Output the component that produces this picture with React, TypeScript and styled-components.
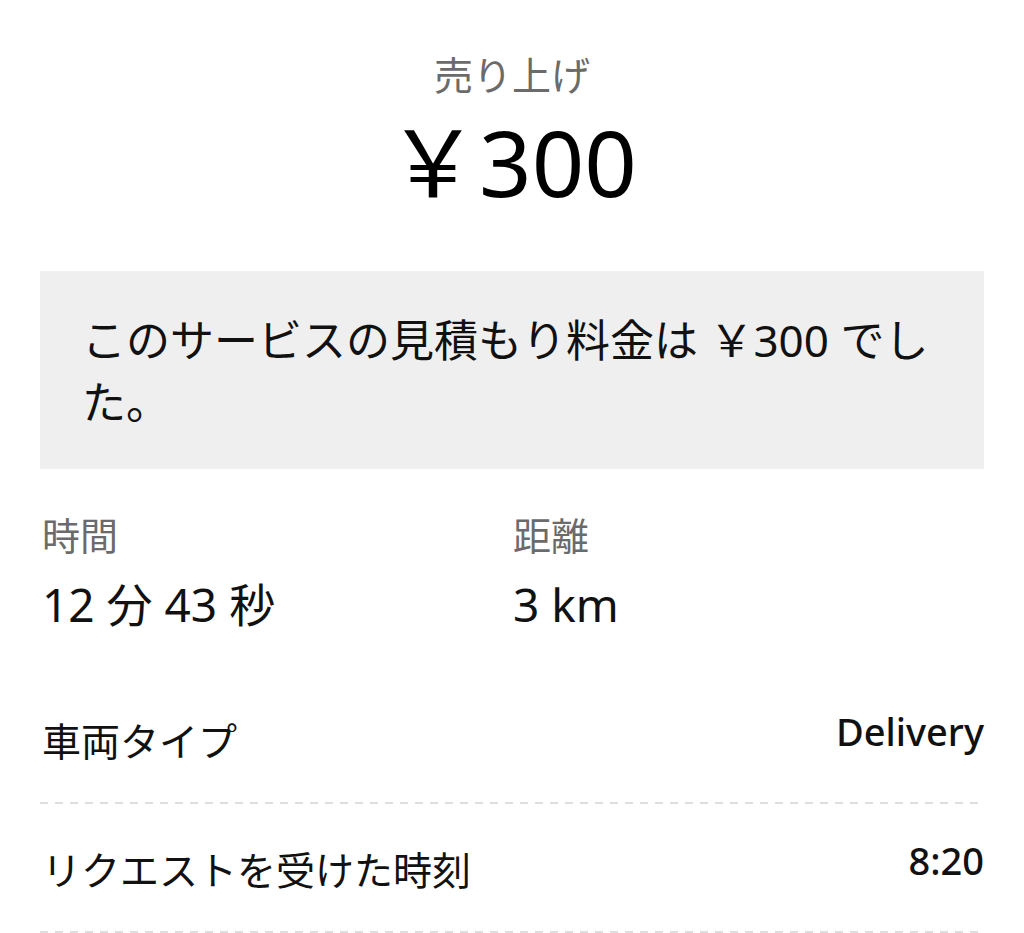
import React from "react";
import styled, { createGlobalStyle } from "styled-components";

const Global = createGlobalStyle`
  html, body { margin: 0; padding: 0; background: #fff; }
  body { font-family: "Noto Sans", "Noto Sans CJK JP", sans-serif; color: #111; }
`;

const Page = styled.div`
  padding: 50px 40px 0;
  display: flex;
  flex-direction: column;
`;

const Header = styled.div`
  display: flex;
  flex-direction: column;
  align-items: center;
`;

const Caption = styled.div`
  font-size: 39px;
  line-height: 50px;
  color: #6b6b6b;
`;

const Amount = styled.div`
  font-size: 92px;
  line-height: 110px;
  color: #000;
  margin-top: 7px;
`;

const Notice = styled.div`
  margin-top: 54px;
  background: #efefef;
  padding: 38px 36px 36px 42px;
  font-size: 44px;
  line-height: 62px;
  color: #111;
`;

const Stats = styled.div`
  display: grid;
  grid-template-columns: 471px 1fr;
  margin-top: 41px;
  padding-left: 2px;
`;

const Stat = styled.div`
  display: flex;
  flex-direction: column;
`;

const StatLabel = styled.div`
  font-size: 38px;
  line-height: 50px;
  color: #6b6b6b;
`;

const StatValue = styled.div`
  font-size: 46px;
  line-height: 70px;
  margin-top: 9px;
  color: #111;
`;

const List = styled.div`
  margin-top: 36px;
  display: flex;
  flex-direction: column;
`;

const Row = styled.div`
  display: flex;
  justify-content: space-between;
  align-items: flex-start;
  padding: 36px 0 33px 2px;
  background: linear-gradient(to right, #dedede 8px, transparent 8px) left bottom / 15px 2px repeat-x;
`;

const RowLabel = styled.div`
  font-size: 39px;
  line-height: 60px;
  color: #111;
`;

const RowValue = styled.div`
  font-size: 38px;
  line-height: 40px;
  font-weight: 500;
  color: #111;
`;

export default function App() {
  return (
    <>
      <Global />
      <Page>
        <Header>
          <Caption>売り上げ</Caption>
          <Amount>￥300</Amount>
        </Header>
        <Notice>このサービスの見積もり料金は ￥300 でした。</Notice>
        <Stats>
          <Stat>
            <StatLabel>時間</StatLabel>
            <StatValue>12 分 43 秒</StatValue>
          </Stat>
          <Stat>
            <StatLabel>距離</StatLabel>
            <StatValue>3 km</StatValue>
          </Stat>
        </Stats>
        <List>
          <Row>
            <RowLabel>車両タイプ</RowLabel>
            <RowValue>Delivery</RowValue>
          </Row>
          <Row>
            <RowLabel>リクエストを受けた時刻</RowLabel>
            <RowValue>8:20</RowValue>
          </Row>
        </List>
      </Page>
    </>
  );
}
